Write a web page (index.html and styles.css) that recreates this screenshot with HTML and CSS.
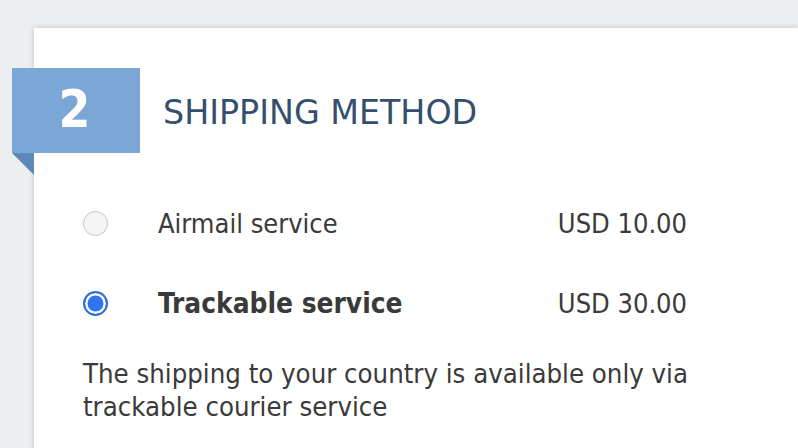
FILE: index.html
```html
<!DOCTYPE html>
<html>
<head>
    <title>Shipping method</title>
    <link rel="stylesheet" href="styles.css">
</head>
<body>
    <div class="card">
        <div class="step-header">
            <div class="step-num">2</div>
            <h2>SHIPPING METHOD</h2>
        </div>
        <div class="options">
            <label class="option">
                <span class="radio"></span>
                <span class="name">Airmail service</span>
                <span class="price">USD 10.00</span>
            </label>
            <label class="option">
                <span class="radio checked"></span>
                <span class="name bold">Trackable service</span>
                <span class="price">USD 30.00</span>
            </label>
        </div>
        <p class="note">The shipping to your country is available only via trackable courier service</p>
    </div>
</body>
</html>
```

FILE: styles.css
```css
body { margin: 0; background-color: #eceef0; font-family: "DejaVu Sans Condensed", "DejaVu Sans", sans-serif; overflow: hidden; }
.card { margin: 28px 0 0 34px; width: 764px; height: 440px; background: white; box-shadow: 0px 0px 6px rgba(0, 0, 0, 0.18); }
.step-header { display: flex; align-items: center; padding-top: 40px; margin-left: -22px; }
.step-num { position: relative; width: 128px; height: 85px; background-color: #7ba7d7; color: white; font-size: 51px; font-weight: bold; line-height: 83px; text-align: center; padding-right: 3px; box-sizing: border-box; }
.step-num::after { content: ""; position: absolute; left: 0; top: 85px; border-top: 22px solid #5d89ba; border-left: 22px solid transparent; }
h2 { margin: 4px 0 0 23px; font-family: "DejaVu Sans", sans-serif; font-size: 33.3px; font-weight: normal; color: #35506e; }
.options { width: 604px; padding: 30px 0 0 49px; }
.option { display: flex; align-items: center; height: 80px; color: #3a3a3a; font-size: 27px; }
.radio { width: 25px; height: 25px; box-sizing: border-box; border: 1px solid #c6c6c6; border-radius: 50%; background: #f5f5f5; }
.radio.checked { border: 2.5px solid #2e6ee0; background: #2f75f0; box-shadow: inset 0 0 0 2.5px white; }
.name { flex: 1; margin-left: 50px; }
.bold { font-weight: bold; font-size: 27.8px; }
.note { margin: 14px 0 0 49px; width: 640px; font-size: 27.3px; line-height: 33px; color: #3a3a3a; }
```
